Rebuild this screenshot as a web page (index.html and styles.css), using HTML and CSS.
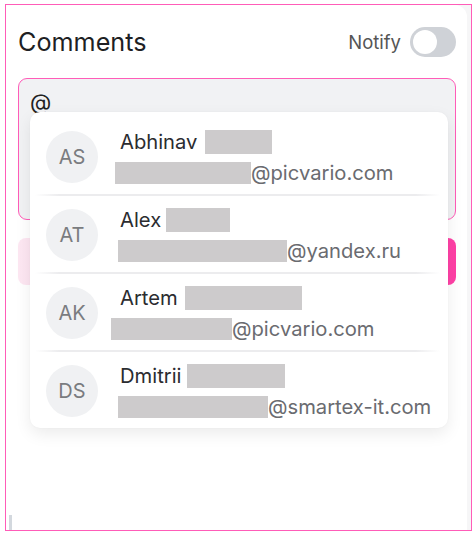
FILE: index.html
```html
<!DOCTYPE html>
<html>
<head>
<meta charset="utf-8">
<link rel="stylesheet" href="styles.css">
</head>
<body>
<div class="frame">
  <div class="card">
    <div class="header">
      <h1 class="title">Comments</h1>
      <div class="notify">
        <span class="notify-label">Notify</span>
        <span class="toggle"><span class="knob"></span></span>
      </div>
    </div>
    <div class="composer">
      <div class="input">
        <div class="input-text">@</div>
        <div class="dropdown">
          <div class="row first">
            <div class="avatar">AS</div>
            <div class="info">
              <div class="name">Abhinav<span class="redact name-redact" style="width:67px;margin-left:8px"></span></div>
              <div class="email"><span class="redact mail-redact" style="width:136px;margin-left:-3px"></span>@picvario.com</div>
            </div>
          </div>
          <div class="row">
            <div class="avatar">AT</div>
            <div class="info">
              <div class="name">Alex<span class="redact name-redact" style="width:64px;margin-left:5px"></span></div>
              <div class="email"><span class="redact mail-redact" style="width:169px;margin-left:0"></span>@yandex.ru</div>
            </div>
          </div>
          <div class="row">
            <div class="avatar">AK</div>
            <div class="info">
              <div class="name">Artem<span class="redact name-redact" style="width:117px;margin-left:7px"></span></div>
              <div class="email"><span class="redact mail-redact" style="width:121px;margin-left:-7px"></span>@picvario.com</div>
            </div>
          </div>
          <div class="row">
            <div class="avatar">DS</div>
            <div class="info">
              <div class="name">Dmitrii<span class="redact name-redact" style="width:98px;margin-left:6px"></span></div>
              <div class="email"><span class="redact mail-redact" style="width:150px;margin-left:0"></span>@smartex-it.com</div>
            </div>
          </div>
        </div>
      </div>
      <div class="send"></div>
    </div>
  </div>
  <span class="handle"></span>
</div>
</body>
</html>
```
FILE: styles.css
```css
* { box-sizing: border-box; }
html, body { margin: 0; padding: 0; background: #fff; }
body {
  font-family: Inter, "Noto Sans", sans-serif;
  color: #222;
}
.frame {
  position: relative;
  margin: 4px 0 0 5px;
  width: 467px;
  height: 527px;
  border: 1px solid #ff5cb8;
  background: #f6f6f7;
}
.card {
  height: 100%;
  background: #fff;
  border-radius: 0 12px 0 0;
  margin-right: 4px;
  padding: 22px 11px 0 12px;
}
.header {
  display: flex;
  align-items: center;
  justify-content: space-between;
  height: 30px;
}
.title {
  margin: 0;
  font-size: 25.2px;
  font-weight: 400;
  color: #1e1f24;
  letter-spacing: 0;
}
.notify {
  display: flex;
  align-items: center;
  gap: 9px;
}
.notify-label {
  font-size: 18.5px;
  color: #555;
}
.toggle {
  position: relative;
  display: block;
  width: 46px;
  height: 30px;
  border-radius: 15px;
  background: #cfd2d7;
}
.knob {
  position: absolute;
  left: 3px;
  top: 3px;
  width: 24px;
  height: 24px;
  border-radius: 50%;
  background: #fff;
}
.composer {
  margin-top: 21px;
  display: flex;
  flex-direction: column;
  gap: 18px;
}
.input {
  position: relative;
  height: 142px;
  border: 1.5px solid #ff5cb8;
  border-radius: 9px;
  background: #f1f2f4;
  padding: 11px 0 0 11px;
}
.input-text {
  font-size: 22px;
  line-height: 24px;
  color: #222;
}
.dropdown {
  position: absolute;
  left: 11px;
  top: 33px;
  width: 418px;
  background: #fff;
  border-radius: 10px;
  box-shadow: 0 6px 16px rgba(0, 0, 0, 0.08), 0 0 2px rgba(0, 0, 0, 0.04);
  padding-top: 4px;
  z-index: 2;
}
.row {
  position: relative;
  display: flex;
  align-items: center;
  height: 78px;
  padding: 10px 0 6px 16px;
}
.row + .row::before {
  content: "";
  position: absolute;
  left: 5px;
  right: 8px;
  top: 0;
  height: 2px;
  background: linear-gradient(90deg, rgba(235,235,237,0) 0%, #ececee 6%, #ececee 94%, rgba(235,235,237,0) 100%);
}
.avatar {
  flex: none;
  width: 52px;
  height: 52px;
  border-radius: 50%;
  background: #f0f1f3;
  color: #7a7c80;
  font-size: 20px;
  display: flex;
  align-items: center;
  justify-content: center;
}
.info {
  margin-left: 20px;
  display: flex;
  flex-direction: column;
}
.name {
  height: 31px;
  display: flex;
  align-items: center;
  padding-left: 2px;
  font-size: 20.2px;
  color: #2b2c30;
}
.email {
  height: 31px;
  display: flex;
  align-items: center;
  font-size: 20.2px;
  color: #6a6b70;
}
.redact {
  display: inline-block;
  background: #cdcbcc;
  flex: none;
}
.name-redact { height: 24px; }
.mail-redact { height: 22px; }
.send {
  height: 47px;
  border-radius: 8px;
  background: linear-gradient(90deg, #fde7f2 0%, #fdd3e8 40%, #ff3ea5 100%);
}
.handle {
  position: absolute;
  left: 3px;
  bottom: 0;
  width: 3px;
  height: 15px;
  background: #d3d8de;
}
```
